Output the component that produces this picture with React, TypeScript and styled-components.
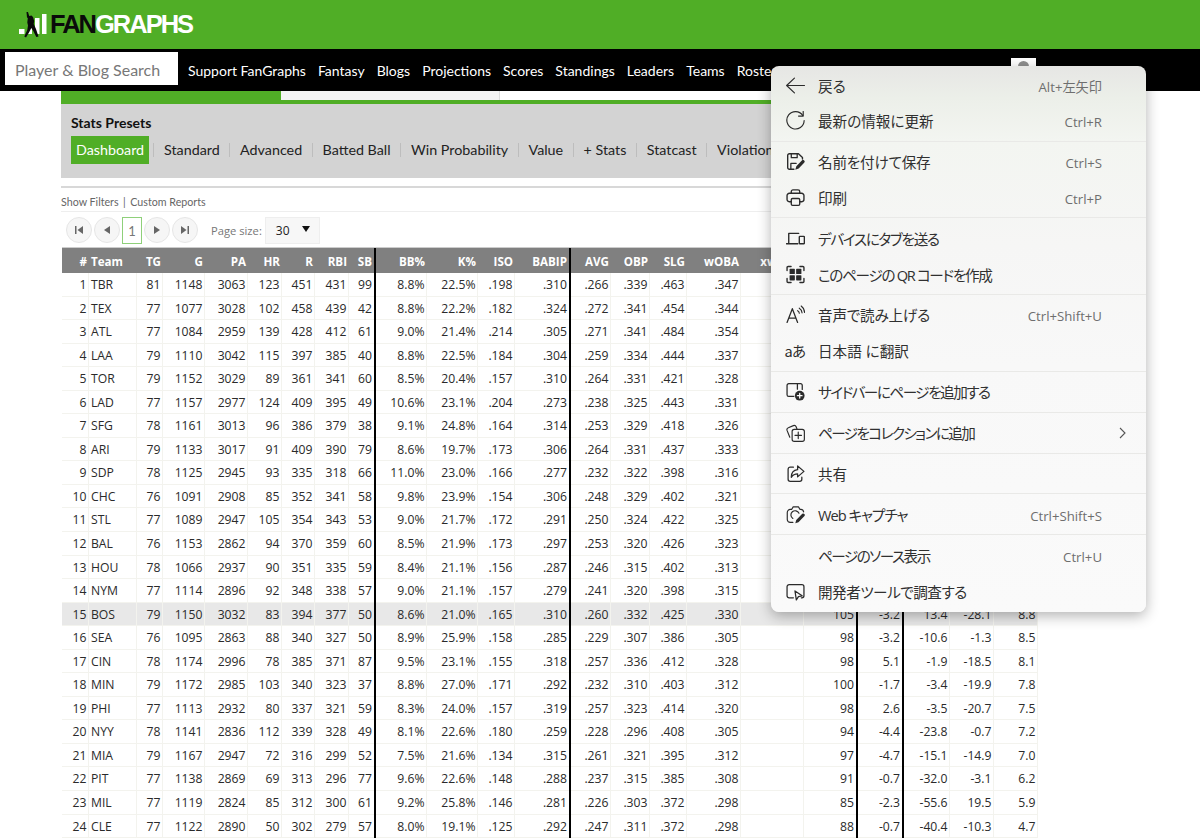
import styled, { createGlobalStyle } from "styled-components"

const GlobalStyle = createGlobalStyle`
  html, body {
    margin: 0;
    height: 838px;
    overflow: hidden;
    background: #fff;
    font-family: Lato, "Liberation Sans", sans-serif;
  }
  * { box-sizing: border-box; }
`

const GREEN = "#50ae26"

const Page = styled.div`
  position: relative;
  width: 1200px;
  height: 838px;
  overflow: hidden;
`

const TopBar = styled.header`
  height: 49px;
  background: ${GREEN};
  display: flex;
  align-items: flex-start;
  padding: 11px 0 0 19px;
`
const LogoText = styled.div`
  margin: 0 0 0 1px;
  font: bold 25.5px/26px "Liberation Sans", Arial, sans-serif;
  letter-spacing: -2px;
  color: #fff;
  b { color: #0a0a0a; }
`

const NavBar = styled.nav`
  height: 42px;
  background: #000;
  display: flex;
  align-items: center;
  padding: 0 164px 0 5px;
  overflow: hidden;
`
const SearchBox = styled.div`
  width: 173px;
  height: 33px;
  margin: -4px 10px 0 0;
  padding-left: 10px;
  background: #fff;
  color: #777;
  font-size: 16px;
  line-height: 35px;
  white-space: nowrap;
`
const NavLink = styled.a`
  color: #fff;
  font-size: 14px;
  margin: 1px 12px 0 0;
  white-space: nowrap;
`
const Avatar = styled.div`
  position: absolute;
  left: 1011px;
  top: 58px;
  width: 25px;
  height: 24px;
  background: #fff;
  overflow: hidden;
  &::after {
    content: "";
    position: absolute;
    left: 7px;
    top: 3px;
    width: 11px;
    height: 11px;
    border-radius: 50%;
    background: #8f8f8f;
  }
`

const Main = styled.main`
  width: 978px;
  margin-left: 61px;
`
const TabStrip = styled.div`
  height: 9px;
  display: flex;
`
const Tab = styled.div<{ $active?: boolean }>`
  width: ${(p) => (p.$active ? 220 : 219)}px;
  background: ${(p) => (p.$active ? GREEN : "#f4f4f4")};
  border-right: 1px solid ${(p) => (p.$active ? GREEN : "#ddd")};
`
const Presets = styled.section`
  height: 78px;
  border-top: 4px solid ${GREEN};
  background: #d3d3d3;
  padding: 10px 10px 0;
`
const PresetTitle = styled.div`
  font-size: 14px;
  font-weight: 700;
  line-height: 17px;
  color: #111;
`
const PresetRow = styled.div`
  display: flex;
  align-items: center;
  margin-top: 5px;
  white-space: nowrap;
`
const Preset = styled.a<{ $active?: boolean }>`
  font-size: 14.3px;
  line-height: 28px;
  height: 28px;
  padding: 0 ${(p) => (p.$active ? "4.5px" : "5px")} 0 5px;
  color: ${(p) => (p.$active ? "#fff" : "#222")};
  background: ${(p) => (p.$active ? GREEN : "transparent")};
`
const PresetSep = styled.i`
  width: 1px;
  height: 14px;
  margin: 0 4.7px;
  background: #bdbdbd;
`
const Rule = styled.div`
  height: 2px;
  margin-top: 8px;
  background: #d8d8d8;
`
const FilterLinks = styled.div`
  font-size: 10.7px;
  line-height: 14px;
  margin-top: 7px;
  color: #666;
  span { margin: 0 4.5px; }
`
const Pager = styled.div`
  height: 37px;
  margin-top: 2px;
  border-top: 1px solid #eee;
  display: flex;
  align-items: center;
  padding: 0 0 0 5px;
`
const PageButton = styled.div`
  width: 26px;
  height: 26px;
  margin-right: 2px;
  border-radius: 50%;
  border: 1px solid #e6e6e6;
  background: #f6f6f6;
  display: flex;
  align-items: center;
  justify-content: center;
`
const PageCurrent = styled.div`
  width: 20px;
  height: 27px;
  margin-right: 2px;
  border: 1px solid #8fd07a;
  color: #777;
  font-size: 13px;
  line-height: 26px;
  text-align: center;
`
const PageLabel = styled.div`
  font-family: "Open Sans", sans-serif;
  font-size: 11.2px;
  color: #777;
  margin: 0 3px 0 11px;
`
const PageSelect = styled.div`
  width: 55px;
  height: 27px;
  background: #f7f7f7;
  border: 1px solid #eee;
  display: flex;
  align-items: center;
  justify-content: space-between;
  padding: 0 9px 0 10px;
  font-family: "Open Sans", sans-serif;
  font-size: 12px;
  color: #222;
  &::after {
    content: "";
    margin-top: -2px;
    border: 4px solid transparent;
    border-top: 6px solid #111;
    border-bottom: 0;
  }
`

const columns = [27, 48, 26, 42, 43, 34, 33, 34, 27, 51, 51, 37, 56, 40, 39, 37, 54, 63, 54, 46, 46, 44, 44]
const heavy = [8, 12, 18, 19]
const gridTemplate = columns.map((c) => `${c}px`).join(" ")

const Grid = styled.div`
  margin-left: 1px;
  width: 976px;
  font-family: "Open Sans", "Noto Sans", sans-serif;
`
const HeadRow = styled.div`
  display: grid;
  grid-template-columns: ${gridTemplate};
  height: 25px;
  background: #808080;
  box-shadow: 0 -1px 0 #ccc;
`
const Row = styled.div<{ $hot?: boolean }>`
  display: grid;
  grid-template-columns: ${gridTemplate};
  height: 23.56px;
  background: ${(p) => (p.$hot ? "#e8e8e8" : "#fff")};
`
const HeadCell = styled.div<{ $left?: boolean; $heavy?: boolean }>`
  font-size: 11.6px;
  font-weight: 700;
  line-height: 27px;
  color: #fff;
  white-space: nowrap;
  overflow: hidden;
  text-align: ${(p) => (p.$left ? "left" : "right")};
  padding: ${(p) => (p.$left ? "0 0 0 2px" : p.$heavy ? "0 2px 0 0" : "0 2px 0 0")};
  border-right: ${(p) => (p.$heavy ? "2px solid #000" : "0")};
`
const Cell = styled.div<{ $left?: boolean; $heavy?: boolean }>`
  font-size: 12.2px;
  line-height: 24px;
  color: #2a2a2a;
  white-space: nowrap;
  overflow: hidden;
  text-align: ${(p) => (p.$left ? "left" : "right")};
  padding: ${(p) => (p.$left ? "0 0 0 2px" : p.$heavy ? "0 2px 0 0" : "0 1.5px 0 0")};
  border-right: ${(p) => (p.$heavy ? "2px solid #000" : "1px solid #f3f3ee")};
  box-shadow: inset 0 -1px 0 #f3f3ee;
`

const head = ["#", "Team", "TG", "G", "PA", "HR", "R", "RBI", "SB", "BB%", "K%", "ISO", "BABIP", "AVG", "OBP", "SLG", "wOBA", "xwOBA", "", "", "", "", ""]

const teams = [
  "TBR 81 1148 3063 123 451 431 99 8.8% 22.5% .198 .310 .266 .339 .463 .347",
  "TEX 77 1077 3028 102 458 439 42 8.8% 22.2% .182 .324 .272 .341 .454 .344",
  "ATL 77 1084 2959 139 428 412 61 9.0% 21.4% .214 .305 .271 .341 .484 .354",
  "LAA 79 1110 3042 115 397 385 40 8.8% 22.5% .184 .304 .259 .334 .444 .337",
  "TOR 79 1152 3029 89 361 341 60 8.5% 20.4% .157 .310 .264 .331 .421 .328",
  "LAD 77 1157 2977 124 409 395 49 10.6% 23.1% .204 .273 .238 .325 .443 .331",
  "SFG 78 1161 3013 96 386 379 38 9.1% 24.8% .164 .314 .253 .329 .418 .326",
  "ARI 79 1133 3017 91 409 390 79 8.6% 19.7% .173 .306 .264 .331 .437 .333",
  "SDP 78 1125 2945 93 335 318 66 11.0% 23.0% .166 .277 .232 .322 .398 .316",
  "CHC 76 1091 2908 85 352 341 58 9.8% 23.9% .154 .306 .248 .329 .402 .321",
  "STL 77 1089 2947 105 354 343 53 9.0% 21.7% .172 .291 .250 .324 .422 .325",
  "BAL 76 1153 2862 94 370 359 60 8.5% 21.9% .173 .297 .253 .320 .426 .323",
  "HOU 78 1066 2937 90 351 335 59 8.4% 21.1% .156 .287 .246 .315 .402 .313",
  "NYM 77 1114 2896 92 348 338 57 9.0% 21.1% .157 .279 .241 .320 .398 .315",
  "BOS 79 1150 3032 83 394 377 50 8.6% 21.0% .165 .310 .260 .332 .425 .330 - 105 -3.2 13.4 -28.1 8.8",
  "SEA 76 1095 2863 88 340 327 50 8.9% 25.9% .158 .285 .229 .307 .386 .305 - 98 -3.2 -10.6 -1.3 8.5",
  "CIN 78 1174 2996 78 385 371 87 9.5% 23.1% .155 .318 .257 .336 .412 .328 - 98 5.1 -1.9 -18.5 8.1",
  "MIN 79 1172 2985 103 340 323 37 8.8% 27.0% .171 .292 .232 .310 .403 .312 - 100 -1.7 -3.4 -19.9 7.8",
  "PHI 77 1113 2932 80 337 321 59 8.3% 24.0% .157 .319 .257 .323 .414 .320 - 98 2.6 -3.5 -20.7 7.5",
  "NYY 78 1141 2836 112 339 328 49 8.1% 22.6% .180 .259 .228 .296 .408 .305 - 94 -4.4 -23.8 -0.7 7.2",
  "MIA 79 1167 2947 72 316 299 52 7.5% 21.6% .134 .315 .261 .321 .395 .312 - 97 -4.7 -15.1 -14.9 7.0",
  "PIT 77 1138 2869 69 313 296 77 9.6% 22.6% .148 .288 .237 .315 .385 .308 - 91 -0.7 -32.0 -3.1 6.2",
  "MIL 77 1119 2824 85 312 300 61 9.2% 25.8% .146 .281 .226 .303 .372 .298 - 85 -2.3 -55.6 19.5 5.9",
  "CLE 77 1122 2890 50 302 279 57 8.0% 19.1% .125 .292 .247 .311 .372 .298 - 88 -0.7 -40.4 -10.3 4.7",
]

const Menu = styled.div`
  position: absolute;
  left: 771px;
  top: 66px;
  width: 375px;
  height: 546px;
  padding-top: 1.5px;
  border-radius: 8px;
  background: linear-gradient(180deg, #e6e6e4 0, #ecefe9 32px, #f3f5f1 75px, #f6f6f5 180px, #f8f8f8 300px, #fafafa 100%);
  box-shadow: 0 4px 14px rgba(0, 0, 0, 0.3);
  font-family: "Open Sans", "Noto Sans CJK JP", sans-serif;
  font-feature-settings: "palt";
  display: flex;
  flex-direction: column;
`
const Item = styled.div`
  height: 35.6px;
  flex: none;
  display: flex;
  align-items: center;
  padding: 0 44px 0 15px;
`
const IconSlot = styled.span`
  width: 18px;
  height: 18px;
  margin-right: 14px;
  flex: none;
  display: flex;
  align-items: center;
  justify-content: center;
  color: #2b2b2b;
  font-family: "Noto Sans CJK JP", sans-serif;
  font-size: 14.5px;
  letter-spacing: -0.5px;
  white-space: nowrap;
`
const ItemLabel = styled.span<{ $tight?: number }>`
  font-size: 14.6px;
  letter-spacing: ${(p) => p.$tight ?? 0}px;
  color: #303030;
  white-space: nowrap;
  flex: 1;
`
const Shortcut = styled.span`
  font-size: 13.2px;
  color: #6e6e6e;
  white-space: nowrap;
  padding-top: 3px;
`
const Chevron = styled.svg`
  margin-right: -25px;
`
const MenuSep = styled.hr`
  flex: none;
  height: 1px;
  margin: 2.2px 0;
  border: 0;
  background: #e9e9e7;
`

const Glyph = ({ children }: { children: React.ReactNode }) => (
  <svg width="19" height="19" viewBox="0 0 18 18" fill="none" stroke="#2b2b2b" strokeWidth="1.1" strokeLinecap="round" strokeLinejoin="round" style={{ flex: "none" }}>
    {children}
  </svg>
)

const icons: Record<string, React.ReactNode> = {
  back: (
    <Glyph>
      <path d="M17.500 9H.6M8 2 .6 9 8 16" />
    </Glyph>
  ),
  refresh: (
    <Glyph>
      <path d="M15.800 4.200A8.200 8.200 0 1 0 17.200 9" />
      <path d="M16.300 .4v4.400h-4.400" />
    </Glyph>
  ),
  save: (
    <Glyph>
      <path d="M7.500 16.300H3.200a1.600 1.600 0 0 1-1.600-1.600V3.300a1.600 1.600 0 0 1 1.600-1.600h8.600l3.800 3.600v1.400" strokeWidth="1.300" />
      <path d="M5 1.800v3.600h5.600V1.800M4.600 15.800v-5h5" strokeWidth="1.200" />
      <path d="M8.800 16.800l1-3.400 5.200-5.400a1.500 1.500 0 0 1 2.200 2.200l-5.200 5.500z" fill="#2b2b2b" stroke="none" />
    </Glyph>
  ),
  print: (
    <Glyph>
      <g strokeWidth="1.300">
        <path d="M5 5V3.400a1.600 1.600 0 0 1 1.600-1.600h4.800A1.600 1.600 0 0 1 13 3.400V5" />
        <path d="M5 13H3a2 2 0 0 1-2-2V7.200A2.200 2.200 0 0 1 3.200 5h11.600A2.200 2.200 0 0 1 17 7.200V11a2 2 0 0 1-2 2h-2" />
        <rect x="5" y="10" width="8" height="6.400" rx="1.200" />
      </g>
    </Glyph>
  ),
  devices: (
    <Glyph>
      <g strokeWidth="1.300">
        <path d="M2.600 13.500V4.200h9.400M.4 14h10.800" />
        <rect x="12.600" y="7" width="4.800" height="7" rx=".6" />
      </g>
    </Glyph>
  ),
  qr: (
    <Glyph>
      <path d="M1 5.200V2.400a1 1 0 0 1 1-1h2.800M13.200 1.400H16a1 1 0 0 1 1 1v2.800M17 12.800v2.800a1 1 0 0 1-1 1h-2.800M4.800 16.600H2a1 1 0 0 1-1-1v-2.800" strokeWidth="1.300" />
      <rect x="3.400" y="3.600" width="5" height="5" rx=".6" fill="#2b2b2b" stroke="none" />
      <rect x="9.600" y="3.600" width="5" height="5" rx=".6" fill="#2b2b2b" stroke="none" />
      <rect x="3.400" y="9.600" width="5" height="5" rx=".6" fill="#2b2b2b" stroke="none" />
      <rect x="9.600" y="9.600" width="5" height="5" rx=".6" fill="#2b2b2b" stroke="none" />
    </Glyph>
  ),
  speak: (
    <Glyph>
      <path d="M1 16.500 6 3.500l5 13M2.600 12.400h6.800" strokeWidth="1.200" />
      <path d="M11 5.400a3 3 0 0 1 1.600 2.400M12.600 3a5.600 5.600 0 0 1 2.600 4.400M14.400 1a8 8 0 0 1 3.200 6" />
    </Glyph>
  ),
  sidebar: (
    <Glyph>
      <path d="M7.500 13.600H2.600A1.600 1.600 0 0 1 1 12V3.200a1.600 1.600 0 0 1 1.600-1.600h11.200a1.600 1.600 0 0 1 1.600 1.600V7" strokeWidth="1.200" />
      <path d="M10.800 1.800v5" strokeWidth="1.200" />
      <circle cx="13" cy="13" r="4.600" fill="#2b2b2b" stroke="none" />
      <path d="M13 10.800v4.400M10.800 13h4.400" stroke="#fff" strokeWidth="1.200" />
    </Glyph>
  ),
  collection: (
    <Glyph>
      <path d="M3.600 13.500 1 7a2 2 0 0 1 1.200-2.500L7 2.500c1-.4 2.200.1 2.600 1.100l.8 2" />
      <rect x="5.800" y="6" width="11.600" height="11.400" rx="2" />
      <path d="M11.600 8.600v6.200M8.500 11.700h6.200" />
    </Glyph>
  ),
  share: (
    <Glyph>
      <path d="M7 3H4a2 2 0 0 0-2 2v9.500a2 2 0 0 0 2 2h9a2 2 0 0 0 2-2v-2" strokeWidth="1.200" />
      <path d="M11 1.800 17 7l-6 5.200V9.400c-2.800 0-4.600 1-6 3.200 0-4 2.200-6.800 6-7.200z" strokeWidth="1.200" />
    </Glyph>
  ),
  capture: (
    <Glyph>
      <path d="M6.500 16.500H4a2.800 2.800 0 0 1-2.800-2.800V7A2.800 2.800 0 0 1 4 4.200h1.300L6.800 1.800h5l1.500 2.400h.7a2.800 2.800 0 0 1 2.700 2.300" strokeWidth="1.100" />
      <path d="M12.300 7.800A4 4 0 1 0 6.500 12.800" strokeWidth="1.100" />
      <path d="M8.800 17.400l.9-3.300 5.700-5.800a1.500 1.500 0 0 1 2.100 2.100l-5.700 5.900z" fill="#2b2b2b" stroke="none" />
    </Glyph>
  ),
  devtools: (
    <Glyph>
      <path d="M7 15H3a2 2 0 0 1-2-2V4.500a2 2 0 0 1 2-2h12a2 2 0 0 1 2 2V13a2 2 0 0 1-2 2h-.5" strokeWidth="1.200" />
      <path d="M8.500 8.500l1.300 8.500 2-3.200 3.500-.7z" strokeWidth="1.200" />
    </Glyph>
  ),
}

type Entry = { icon?: string; mark?: string; label: string; key?: string; more?: boolean; sep?: boolean; tight?: number }

const entries: Entry[] = [
  { icon: "back", label: "戻る", key: "Alt+左矢印" },
  { icon: "refresh", label: "最新の情報に更新", key: "Ctrl+R", sep: true },
  { icon: "save", label: "名前を付けて保存", key: "Ctrl+S", tight: -0.2 },
  { icon: "print", label: "印刷", key: "Ctrl+P", sep: true },
  { icon: "devices", label: "デバイスにタブを送る", tight: -1.3 },
  { icon: "qr", label: "このページの QR コードを作成", tight: -1.3, sep: true },
  { icon: "speak", label: "音声で読み上げる", key: "Ctrl+Shift+U", tight: -0.2 },
  { mark: "aあ", label: "日本語 に翻訳", sep: true },
  { icon: "sidebar", label: "サイドバーにページを追加する", tight: -1.5, sep: true },
  { icon: "collection", label: "ページをコレクションに追加", more: true, tight: -1.6, sep: true },
  { icon: "share", label: "共有", sep: true },
  { icon: "capture", label: "Web キャプチャ", key: "Ctrl+Shift+S", tight: -1, sep: true },
  { label: "ページのソース表示", key: "Ctrl+U", tight: -1.5 },
  { icon: "devtools", label: "開発者ツールで調査する", tight: -0.5 },
]

const navLinks = ["Support FanGraphs", "Fantasy", "Blogs", "Projections", "Scores", "Standings", "Leaders", "Teams", "Rosters"]
const presets = ["Dashboard", "Standard", "Advanced", "Batted Ball", "Win Probability", "Value", "+ Stats", "Statcast", "Violations"]

const PagerIcon = ({ d }: { d: string }) => (
  <svg width="10" height="10" viewBox="0 0 10 10" fill="#666">
    <path d={d} />
  </svg>
)

function Logo() {
  return (
    <svg width="30" height="27" viewBox="0 0 30 27">
      <rect x="0" y="18" width="5.500" height="5" fill="#fff" />
      <rect x="9" y="11" width="4" height="12" fill="#fff" />
      <rect x="16" y="7" width="4.500" height="16" fill="#fff" />
      <rect x="23" y="3" width="4.500" height="20" fill="#fff" />
      <path d="M9 1l1.200 4 2.300-.5 1.500 1.500 1.200 4-.5 3 2.300 5 2.500 7.500-2.200.5-3-6-2-3-2 4-3.300 5.500-1.700-1 3-6.500.7-4.500-.7-3 .5-4.500-.8-.5-.5-5.500z" fill="#0a0a0a" />
    </svg>
  )
}

export default function App() {
  return (
    <Page>
      <GlobalStyle />
      <TopBar>
        <Logo />
        <LogoText>
          <b>FAN</b>GRAPHS
        </LogoText>
      </TopBar>
      <NavBar>
        <SearchBox>Player &amp; Blog Search</SearchBox>
        {navLinks.map((n) => (
          <NavLink key={n}>{n}</NavLink>
        ))}
      </NavBar>
      <Avatar />

      <Main>
        <TabStrip>
          <Tab $active />
          <Tab />
        </TabStrip>
        <Presets>
          <PresetTitle>Stats Presets</PresetTitle>
          <PresetRow>
            {presets.map((p, i) => (
              <>
                {i > 0 && <PresetSep />}
                <Preset key={p} $active={i === 0}>
                  {p}
                </Preset>
              </>
            ))}
          </PresetRow>
        </Presets>
        <Rule />
        <FilterLinks>
          Show Filters<span>|</span>Custom Reports
        </FilterLinks>
        <Pager>
          <PageButton>
            <PagerIcon d="M1 1h1.500v8H1zM9 1v8L3.500 5z" />
          </PageButton>
          <PageButton>
            <PagerIcon d="M8 1v8L2 5z" />
          </PageButton>
          <PageCurrent>1</PageCurrent>
          <PageButton>
            <PagerIcon d="M2 1v8l6-4z" />
          </PageButton>
          <PageButton>
            <PagerIcon d="M1 1v8l5.500-4zM7.500 1H9v8H7.500z" />
          </PageButton>
          <PageLabel>Page size:</PageLabel>
          <PageSelect>30</PageSelect>
        </Pager>
        <Grid>
          <HeadRow>
            {head.map((h, i) => (
              <HeadCell key={i} $left={i === 1} $heavy={heavy.includes(i)}>
                {h}
              </HeadCell>
            ))}
          </HeadRow>
          {teams.map((t, r) => {
            const values = [String(r + 1), ...t.split(" ")]
            return (
              <Row key={r} $hot={r === 14}>
                {head.map((_, i) => (
                  <Cell key={i} $left={i === 1} $heavy={heavy.includes(i)}>
                    {values[i] === "-" ? "" : values[i]}
                  </Cell>
                ))}
              </Row>
            )
          })}
        </Grid>
      </Main>

      <Menu>
        {entries.map((e) => (
          <>
            <Item key={e.label}>
              <IconSlot>{e.mark ?? (e.icon ? icons[e.icon] : null)}</IconSlot>
              <ItemLabel $tight={e.tight}>{e.label}</ItemLabel>
              {e.key && <Shortcut>{e.key}</Shortcut>}
              {e.more && (
                <Chevron width="9" height="12" viewBox="0 0 9 12" fill="none" stroke="#555" strokeWidth="1.100">
                  <path d="M2 1l5 5-5 5" />
                </Chevron>
              )}
            </Item>
            {e.sep && <MenuSep />}
          </>
        ))}
      </Menu>
    </Page>
  )
}
